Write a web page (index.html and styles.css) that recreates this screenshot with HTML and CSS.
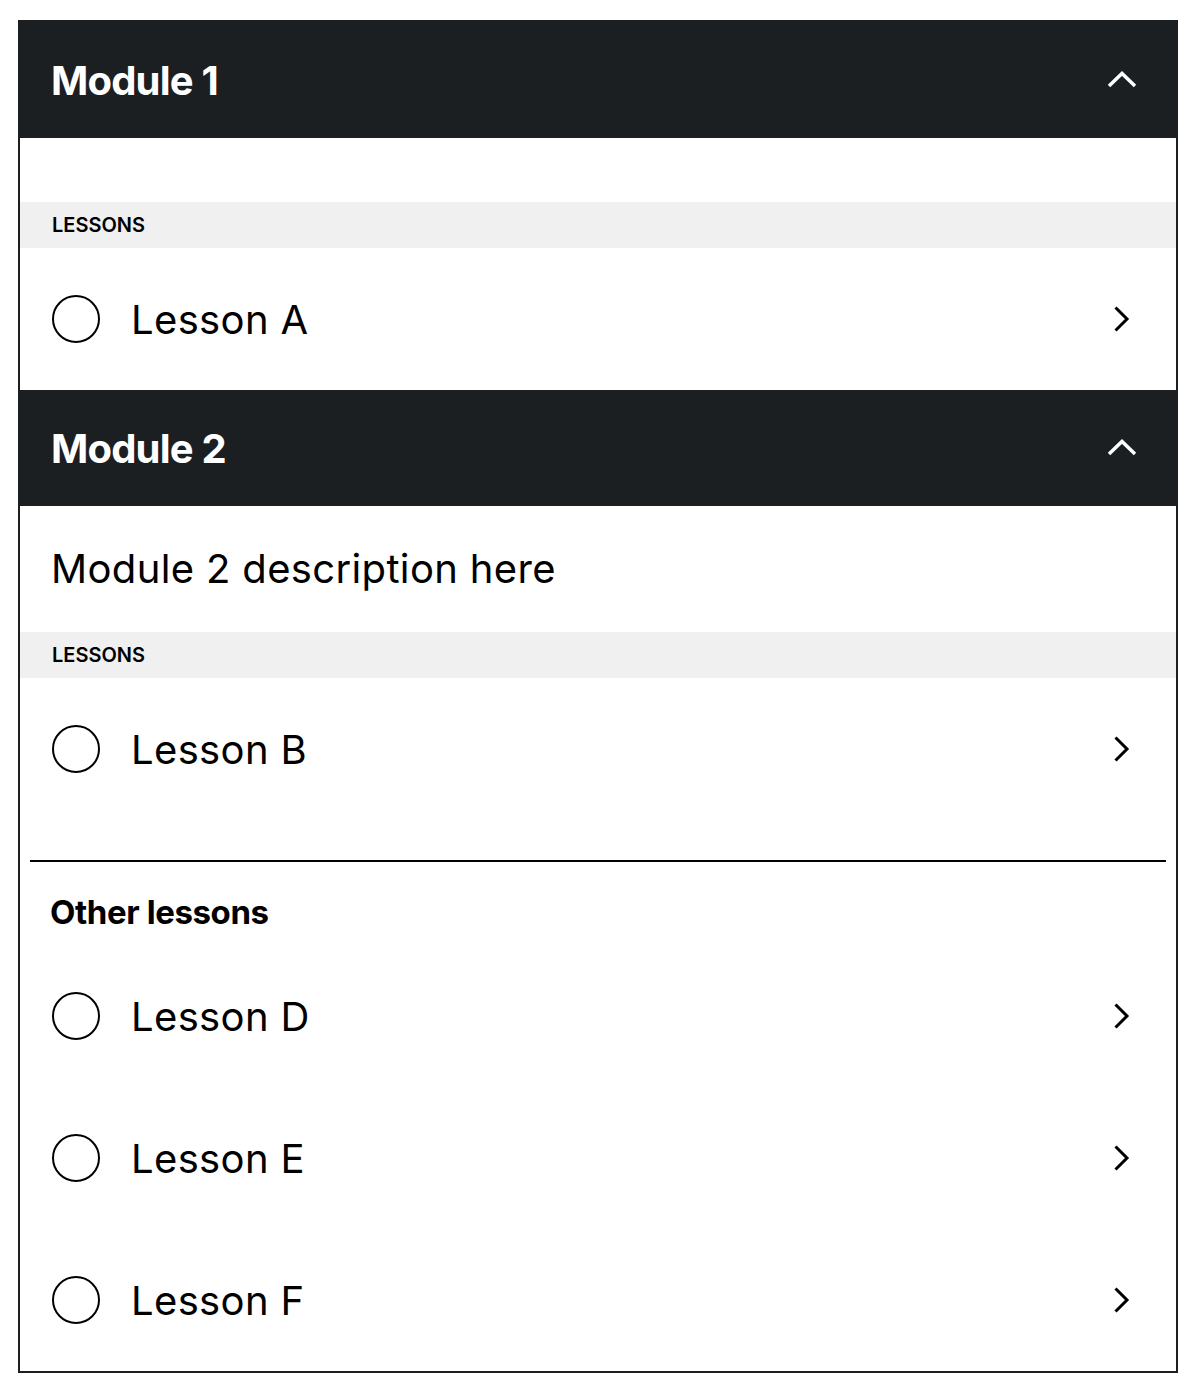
FILE: index.html
```html
<!DOCTYPE html>
<html lang="en">
<head>
    <meta charset="UTF-8">
    <title>Course</title>
    <link rel="stylesheet" href="styles.css">
</head>
<body>
<div class="course">
    <div class="module">
        <div class="module-head">
            <h2>Module 1</h2>
            <svg class="icon" width="36" height="36" viewBox="0 0 36 36"><path d="M5 24 L18 11.5 L31 24" fill="none" stroke="#fff" stroke-width="3.5"/></svg>
        </div>
        <div class="module-desc"></div>
        <div class="label">LESSONS</div>
        <a class="lesson" href="#">
            <span class="check"></span>
            <span class="name">Lesson A</span>
            <svg class="icon" width="36" height="36" viewBox="0 0 36 36"><path d="M11.5 6.5 L23 18 L11.5 29.5" fill="none" stroke="#000" stroke-width="3"/></svg>
        </a>
    </div>
    <div class="module">
        <div class="module-head">
            <h2>Module 2</h2>
            <svg class="icon" width="36" height="36" viewBox="0 0 36 36"><path d="M5 24 L18 11.5 L31 24" fill="none" stroke="#fff" stroke-width="3.5"/></svg>
        </div>
        <div class="module-desc"><p>Module 2 description here</p></div>
        <div class="label">LESSONS</div>
        <a class="lesson" href="#">
            <span class="check"></span>
            <span class="name">Lesson B</span>
            <svg class="icon" width="36" height="36" viewBox="0 0 36 36"><path d="M11.5 6.5 L23 18 L11.5 29.5" fill="none" stroke="#000" stroke-width="3"/></svg>
        </a>
    </div>
    <hr class="divider">
    <div class="other">
        <h3>Other lessons</h3>
        <a class="lesson" href="#">
            <span class="check"></span>
            <span class="name">Lesson D</span>
            <svg class="icon" width="36" height="36" viewBox="0 0 36 36"><path d="M11.5 6.5 L23 18 L11.5 29.5" fill="none" stroke="#000" stroke-width="3"/></svg>
        </a>
        <a class="lesson" href="#">
            <span class="check"></span>
            <span class="name">Lesson E</span>
            <svg class="icon" width="36" height="36" viewBox="0 0 36 36"><path d="M11.5 6.5 L23 18 L11.5 29.5" fill="none" stroke="#000" stroke-width="3"/></svg>
        </a>
        <a class="lesson" href="#">
            <span class="check"></span>
            <span class="name">Lesson F</span>
            <svg class="icon" width="36" height="36" viewBox="0 0 36 36"><path d="M11.5 6.5 L23 18 L11.5 29.5" fill="none" stroke="#000" stroke-width="3"/></svg>
        </a>
    </div>
</div>
</body>
</html>
```

FILE: styles.css
```css
* {
    margin: 0;
    padding: 0;
    box-sizing: border-box;
}
body {
    padding: 20px 20px 20px 18px;
    font-family: Inter, "Noto Sans", sans-serif;
    color: #000;
    background: #fff;
}
.course {
    border: 2px solid #1c1f22;
}
.module-head {
    display: flex;
    align-items: center;
    justify-content: space-between;
    height: 116px;
    padding: 0 36px 0 31px;
    background: #1c1f22;
    color: #fff;
}
.module-head h2 {
    font-size: 40px;
    font-weight: 700;
    letter-spacing: -0.8px;
}
.icon {
    display: block;
    flex: none;
}
.module-desc {
    padding: 32px 31px;
}
.module-desc p {
    font-size: 40px;
    line-height: 62px;
    letter-spacing: 0.35px;
}
.label {
    height: 46px;
    line-height: 46px;
    padding: 0 32px;
    background: #f0f0f0;
    font-size: 20px;
    font-weight: 600;
}
.lesson {
    display: flex;
    align-items: center;
    height: 142px;
    padding: 0 36px 0 32px;
    color: #000;
    text-decoration: none;
}
.check {
    width: 48px;
    height: 48px;
    border: 2px solid #000;
    border-radius: 50%;
    flex: none;
}
.name {
    flex: 1;
    margin-left: 31px;
    font-size: 40px;
    letter-spacing: 0.35px;
}
.divider {
    height: 2px;
    margin: 40px 10px 0;
    border: 0;
    background: #000;
}
.other h3 {
    margin: 32px 0 15px;
    padding-left: 30px;
    font-size: 33px;
    font-weight: 700;
    line-height: 36px;
    letter-spacing: -0.4px;
}
```
